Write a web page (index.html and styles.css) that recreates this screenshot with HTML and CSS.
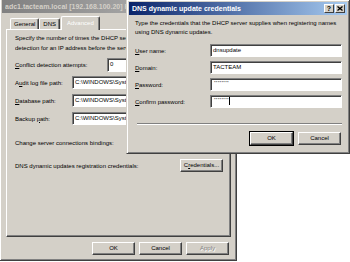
FILE: index.html
```html
<!DOCTYPE html>
<html lang="en">
<head>
  <meta charset="UTF-8" />
  <title>DNS dynamic update credentials</title>
  <link rel="stylesheet" href="styles.css">
</head>
<body>
  <div class="desktop">
    <div class="win props">
      <div class="titlebar inactive"><span class="clip title-clip">adc1.tacteam.local [192.168.100.20] Properties</span></div>
      <div class="tabs">
        <span class="tab">General</span>
        <span class="tab">DNS</span>
        <span class="tab active">Advanced</span>
      </div>
      <div class="panel">
        <p class="intro clip">Specify the number of times the DHCP server should attempt conflict<br>detection for an IP address before the server leases the address to a client.</p>
        <div class="row r-conflict">
          <label class="lbl-wide"><u>C</u>onflict detection attempts:</label>
          <span class="field short">0</span>
        </div>
        <div class="row r-audit">
          <label>A<u>u</u>dit log file path:</label>
          <span class="field cut">C:\WINDOWS\System32\dhcp</span>
        </div>
        <div class="row r-db">
          <label><u>D</u>atabase path:</label>
          <span class="field cut">C:\WINDOWS\System32\dhcp</span>
        </div>
        <div class="row r-backup">
          <label>Backup <u>p</u>ath:</label>
          <span class="field cut">C:\WINDOWS\System32\dhcp\backup</span>
        </div>
        <p class="line r-bind">Change server connections bindings:</p>
        <div class="row r-cred">
          <span class="line">DNS dynamic updates registration credentials:</span>
          <button class="btn cred">C<u>r</u>edentials...</button>
        </div>
      </div>
      <div class="actions">
        <button class="btn">OK</button>
        <button class="btn">Cancel</button>
        <button class="btn" disabled>Apply</button>
      </div>
    </div>

    <div class="win dlg">
      <div class="titlebar active">
        <span>DNS dynamic update credentials</span>
        <span class="caption-btns">
          <span class="cap">?</span>
          <span class="cap"><svg width="6" height="5" viewBox="0 0 6 5"><path d="M0.5 0.5L5.5 4.5M5.5 0.5L0.5 4.5" stroke="#000" stroke-width="1.3"/></svg></span>
        </span>
      </div>
      <div class="dlg-body">
        <p class="desc">Type the credentials that the DHCP server supplies when registering names<br>using DNS dynamic updates.</p>
        <div class="form">
          <div class="frow"><label><u>U</u>ser name:</label><span class="field">dnsupdate</span></div>
          <div class="frow"><label><u>D</u>omain:</label><span class="field">TACTEAM</span></div>
          <div class="frow"><label><u>P</u>assword:</label><span class="field pw">********</span></div>
          <div class="frow"><label><u>C</u>onfirm password:</label><span class="field pw">********<i class="caret"></i></span></div>
        </div>
        <div class="sep"></div>
        <div class="dlg-actions">
          <button class="btn default">OK</button>
          <button class="btn">Cancel</button>
        </div>
      </div>
    </div>
  </div>
</body>
</html>
```

FILE: styles.css
```css
* {
  box-sizing: border-box;
}
body {
  margin: 0;
  background: #fff;
  font-family: 'Liberation Sans', Arial, sans-serif;
  font-size: 6px;
  color: #000;
}
p {
  margin: 0;
}
.desktop {
  position: relative;
  width: 350px;
  height: 262px;
  overflow: hidden;
}
.clip {
  overflow: hidden;
  white-space: nowrap;
}

/* classic raised window frame */
.win {
  position: absolute;
  background: #d4d0c8;
  border: 1px solid;
  border-color: #d4d0c8 #404040 #404040 #d4d0c8;
  box-shadow: inset 1px 1px #fff, inset -1px -1px #808080;
  padding: 2px;
}
.props {
  left: -1px;
  top: -3px;
  width: 238px;
  height: 264px;
}
.dlg {
  left: 126px;
  top: -1px;
  width: 224px;
  height: 155px;
}

.titlebar {
  height: 13px;
  line-height: 13px;
  padding: 0 3px;
  font-weight: bold;
  font-size: 7px;
  white-space: nowrap;
  overflow: hidden;
  display: flex;
  justify-content: space-between;
  align-items: center;
}
.title-clip {
  width: 124px;
}
.inactive {
  background: linear-gradient(to right, #808080, #c0c0c0);
  color: #d4d0c8;
}
.active {
  background: linear-gradient(to right, #0a246a, #a6caf0);
  color: #fff;
  padding-right: 2px;
}
.caption-btns {
  display: flex;
  gap: 1px;
}
.cap {
  width: 10px;
  height: 9px;
  background: #d4d0c8;
  border: 1px solid;
  border-color: #fff #404040 #404040 #fff;
  color: #000;
  font-size: 7px;
  line-height: 7px;
  text-align: center;
  display: flex;
  align-items: center;
  justify-content: center;
}

/* tabs */
.tabs {
  display: flex;
  align-items: flex-end;
  height: 13px;
  margin: 3px 0 0 6px;
  position: relative;
  z-index: 1;
}
.tab {
  height: 11px;
  line-height: 10px;
  padding: 0 3px;
  border: 1px solid;
  border-bottom: none;
  border-color: #fff #404040 #404040 #fff;
  box-shadow: inset -1px 0 #808080;
  border-radius: 2px 2px 0 0;
  background: #d4d0c8;
}
.tab:first-child {
  margin-left: 2px;
}
.tab.active {
  height: 14px;
  margin: 0 -1px -1px 1px;
  padding: 0 5px;
  line-height: 12px;
}
.panel {
  height: 208px;
  margin: 0 3px 0 4px;
  border: 1px solid;
  border-color: #fff #404040 #404040 #fff;
  box-shadow: inset -1px -1px #808080;
  padding: 3px 0 0 8px;
  white-space: nowrap;
}
.intro {
  line-height: 10px;
  width: 112px;
}
.row {
  display: flex;
  align-items: center;
}
.row label {
  width: 57px;
}
.row .lbl-wide {
  width: 92px;
}
.r-conflict {
  margin-top: 5px;
  height: 14px;
}
.r-conflict .field {
  height: 14px;
}
.r-audit {
  margin-top: 4px;
}
.r-db,
.r-backup {
  margin-top: 5px;
}
.line {
  line-height: 10px;
}
.r-bind {
  margin-top: 13px;
}
.r-cred {
  margin-top: 10px;
  height: 15px;
}
.r-cred .line {
  width: 165px;
}
.cred {
  width: 42px;
  height: 15px;
}

/* sunken edit box */
.field {
  display: block;
  height: 13px;
  line-height: 11px;
  padding: 0 2px;
  background: #fff;
  border: 1px solid;
  border-color: #808080 #fff #fff #808080;
  box-shadow: inset 1px 1px #404040;
  width: 132px;
  white-space: nowrap;
  overflow: hidden;
}
.field.short {
  width: 21px;
}
.field.cut {
  width: 56px;
}
.pw {
  font-size: 4px;
  letter-spacing: 0.3px;
  line-height: 8px;
  padding-left: 3px;
}
.caret {
  display: inline-block;
  width: 1px;
  height: 8px;
  background: #000;
  vertical-align: top;
  margin-top: 1px;
}

/* buttons */
.btn {
  font: inherit;
  color: #000;
  background: #d4d0c8;
  border: 1px solid;
  border-color: #fff #404040 #404040 #fff;
  box-shadow: inset -1px -1px #808080;
  width: 43px;
  height: 13px;
  padding: 0;
  line-height: 11px;
}
.btn:disabled {
  color: #808080;
  text-shadow: 1px 1px #fff;
}
.btn.default {
  outline: 1px solid #000;
  outline-offset: 0;
}
.actions {
  display: flex;
  justify-content: flex-end;
  gap: 4px;
  margin: 5px 5px 0 0;
}

/* dialog */
.dlg-body {
  padding: 4px 5px 0 6px;
  white-space: nowrap;
}
.desc {
  line-height: 9px;
}
.form {
  margin-top: 7px;
  display: flex;
  flex-direction: column;
  gap: 4px;
}
.frow {
  display: flex;
  align-items: center;
}
.frow label {
  width: 75px;
}
.sep {
  margin: 15px 0 0 2px;
  border-top: 1px solid #808080;
  border-bottom: 1px solid #fff;
}
.dlg-actions {
  display: flex;
  justify-content: flex-end;
  gap: 5px;
  margin: 7px 1px 0 0;
}
.dlg-actions .btn {
  width: 43px;
}
```
